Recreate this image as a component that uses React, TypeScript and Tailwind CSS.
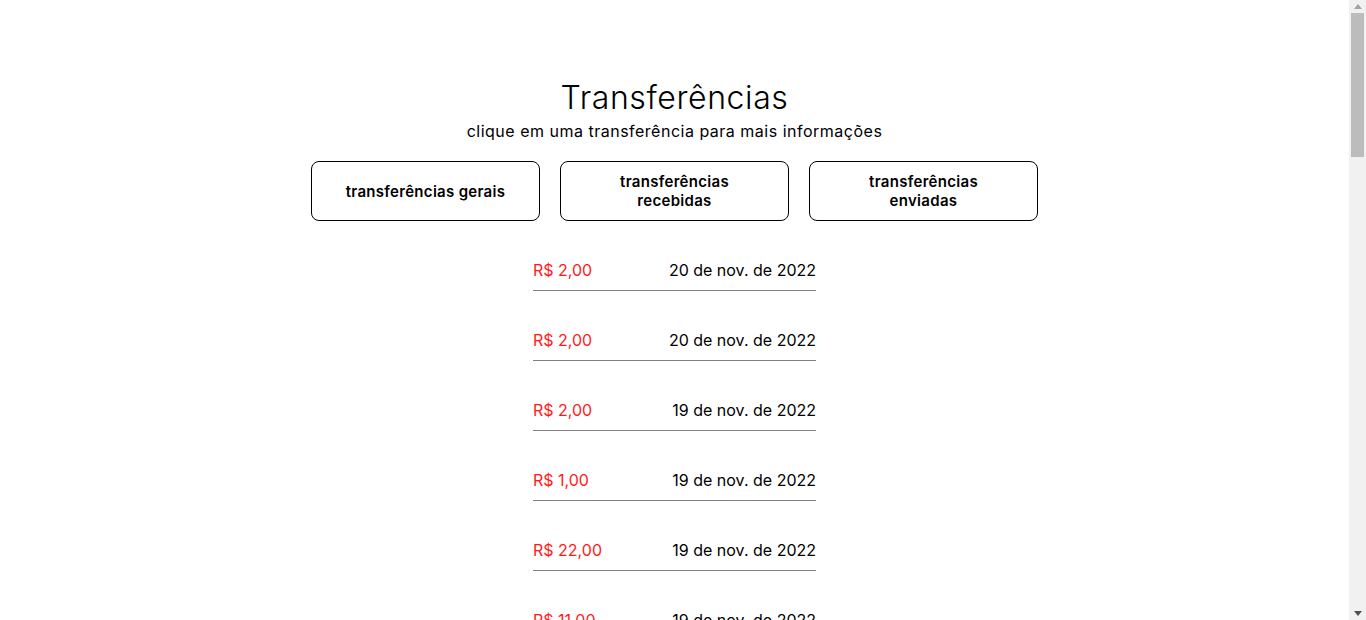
import React from "react";

const rows: [string, string][] = [
  ["R$ 2,00", "20 de nov. de 2022"],
  ["R$ 2,00", "20 de nov. de 2022"],
  ["R$ 2,00", "19 de nov. de 2022"],
  ["R$ 1,00", "19 de nov. de 2022"],
  ["R$ 22,00", "19 de nov. de 2022"],
  ["R$ 11,00", "19 de nov. de 2022"],
  ["R$ 5,00", "18 de nov. de 2022"],
  ["R$ 3,00", "18 de nov. de 2022"],
  ["R$ 10,00", "18 de nov. de 2022"],
  ["R$ 2,00", "17 de nov. de 2022"],
  ["R$ 1,00", "17 de nov. de 2022"],
  ["R$ 4,00", "17 de nov. de 2022"],
  ["R$ 2,00", "16 de nov. de 2022"],
  ["R$ 7,00", "16 de nov. de 2022"],
  ["R$ 1,00", "15 de nov. de 2022"],
  ["R$ 2,00", "15 de nov. de 2022"],
  ["R$ 15,00", "14 de nov. de 2022"],
  ["R$ 2,00", "14 de nov. de 2022"],
  ["R$ 1,00", "13 de nov. de 2022"],
  ["R$ 3,00", "13 de nov. de 2022"],
  ["R$ 2,00", "12 de nov. de 2022"],
  ["R$ 6,00", "12 de nov. de 2022"],
  ["R$ 1,00", "11 de nov. de 2022"],
  ["R$ 2,00", "11 de nov. de 2022"],
  ["R$ 20,00", "10 de nov. de 2022"],
  ["R$ 2,00", "10 de nov. de 2022"],
  ["R$ 1,00", "9 de nov. de 2022"],
  ["R$ 5,00", "9 de nov. de 2022"],
  ["R$ 2,00", "8 de nov. de 2022"],
  ["R$ 1,00", "8 de nov. de 2022"],
  ["R$ 3,00", "7 de nov. de 2022"],
  ["R$ 2,00", "7 de nov. de 2022"],
];

export default function App() {
  return (
    <div className="flex h-[620px] overflow-hidden bg-white text-black font-['Inter',_'Noto_Sans',_sans-serif]">
      <main className="flex-1 flex flex-col items-center pt-[78px] pb-[50px]">
        <h1 className="text-[32px] leading-[39px] font-light tracking-[0.6px]">Transferências</h1>
        <p className="text-[16px] leading-[19px] mt-[5px] tracking-[0.5px]">
          clique em uma transferência para mais informações
        </p>
        <div className="flex gap-[20px] mt-[20px]">
          {["transferências gerais", "transferências recebidas", "transferências enviadas"].map((t) => (
            <button
              key={t}
              className="w-[229px] h-[60px] border border-black rounded-[8px] bg-white text-[15px] leading-[19px] font-semibold tracking-[0.3px] px-[30px] text-center"
            >
              {t}
            </button>
          ))}
        </div>
        <ul className="flex flex-col gap-[40px] mt-[40px] w-[283px] shrink-0">
          {rows.map(([v, d], i) => (
            <li
              key={i}
              className="flex justify-between items-center pb-[10px] border-b border-[#808080] text-[16px] leading-[19px]"
            >
              <span className="text-[#ff1a1a]">{v}</span>
              <span>{d}</span>
            </li>
          ))}
        </ul>
      </main>
      <aside className="w-[17px] shrink-0 h-[620px] bg-[#f1f1f1] flex flex-col items-center">
        <div className="h-[13px] flex items-center justify-center">
          <svg width="8" height="5" viewBox="0 0 8 5">
            <polygon points="4,0 8,5 0,5" fill="#a3a3a3" />
          </svg>
        </div>
        <div className="w-[13px] h-[144px] bg-[#bcbcbc]" />
        <div className="flex-1" />
        <div className="h-[13px] flex items-center justify-center">
          <svg width="8" height="5" viewBox="0 0 8 5">
            <polygon points="0,0 8,0 4,5" fill="#505050" />
          </svg>
        </div>
      </aside>
    </div>
  );
}
